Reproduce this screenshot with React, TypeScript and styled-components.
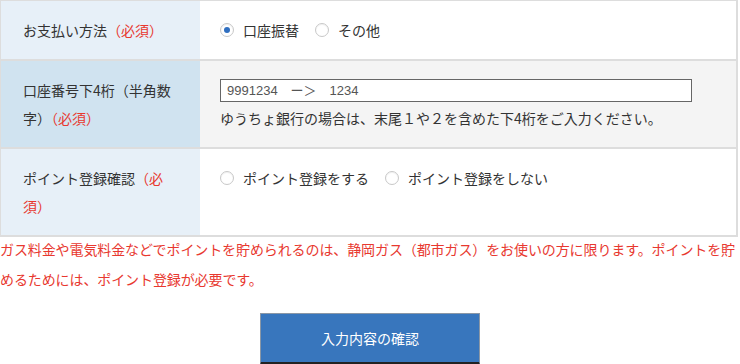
import React from "react";
import styled, { createGlobalStyle } from "styled-components";

const GlobalStyle = createGlobalStyle`
  html, body {
    margin: 0;
    padding: 0;
    background: #ffffff;
  }
  body {
    font-family: "Noto Sans CJK JP", "Noto Sans", sans-serif;
    font-size: 14px;
    color: #333333;
  }
`;

const Page = styled.div`
  width: 740px;
`;

const FormTable = styled.div`
  width: 738px;
  border-left: 1px solid #dddddd;
  border-right: 2px solid #dddddd;
  border-top: 1px solid #dddddd;
  box-sizing: border-box;
`;

const Row = styled.div`
  display: grid;
  grid-template-columns: 199px 1fr;
  border-bottom: 2px solid #dddddd;
`;

const Label = styled.div<{ $tone: "light" | "dark" }>`
  background: ${(p) => (p.$tone === "dark" ? "#d0e3f0" : "#e7f0f8")};
  padding: 15px 22px;
  line-height: 28px;
  display: flex;
  align-items: center;
`;

const Required = styled.span`
  color: #e8382f;
`;

const Value = styled.div<{ $grey?: boolean }>`
  background: ${(p) => (p.$grey ? "#f4f4f4" : "#ffffff")};
  padding: 15px 20px;
  line-height: 28px;
`;

const RadioGroup = styled.div`
  display: flex;
  align-items: center;
  gap: 16px;
`;

const RadioItem = styled.label`
  display: flex;
  align-items: center;
  gap: 9px;
  cursor: pointer;
`;

const RadioMark = styled.span<{ $checked?: boolean }>`
  width: 14px;
  height: 14px;
  border-radius: 50%;
  border: 1px solid #c8c8c8;
  background: #ffffff;
  box-sizing: border-box;
  box-shadow: inset 0 1px 1px rgba(0, 0, 0, 0.06);
  display: flex;
  align-items: center;
  justify-content: center;
  &::after {
    content: "";
    width: 6px;
    height: 6px;
    border-radius: 50%;
    background: ${(p) => (p.$checked ? "#2f6fc0" : "transparent")};
  }
`;

const InputLine = styled.div`
  height: 28px;
  display: flex;
  align-items: center;
`;

const TextInput = styled.input`
  width: 472px;
  height: 23px;
  box-sizing: border-box;
  border: 1px solid #666666;
  border-radius: 0;
  padding: 0 6px;
  font-family: "Liberation Sans", "Noto Sans CJK JP", sans-serif;
  font-size: 13px;
  color: #555555;
  background: #ffffff;
  outline: none;
  &::placeholder {
    color: #555555;
    opacity: 1;
  }
`;

const Note = styled.p`
  margin: -3px 0 0;
  color: #e8382f;
  line-height: 30px;
  letter-spacing: -0.1px;
`;

const ButtonArea = styled.div`
  display: flex;
  justify-content: center;
  padding-top: 19px;
`;

const SubmitButton = styled.button`
  width: 220px;
  height: 52px;
  background: #3876bd;
  color: #ffffff;
  font-family: "Noto Sans CJK JP", sans-serif;
  font-size: 14px;
  border: 1px solid #8a97a6;
  border-bottom: 3px solid #222222;
  padding: 0;
  cursor: pointer;
`;

type Option = { label: string; checked?: boolean };

const RadioSet = ({ options }: { options: Option[] }) => (
  <RadioGroup>
    {options.map((o) => (
      <RadioItem key={o.label}>
        <RadioMark $checked={o.checked} />
        {o.label}
      </RadioItem>
    ))}
  </RadioGroup>
);

export default function App() {
  return (
    <Page>
      <GlobalStyle />
      <FormTable>
        <Row>
          <Label $tone="light">
            <span>
              お支払い方法<Required>（必須）</Required>
            </span>
          </Label>
          <Value>
            <RadioSet options={[{ label: "口座振替", checked: true }, { label: "その他" }]} />
          </Value>
        </Row>
        <Row>
          <Label $tone="dark">
            <span>
              口座番号下4桁（半角数字）<Required>（必須）</Required>
            </span>
          </Label>
          <Value $grey>
            <InputLine>
              <TextInput placeholder="9991234　ー＞　1234" />
            </InputLine>
            <div>ゆうちょ銀行の場合は、末尾１や２を含めた下4桁をご入力ください。</div>
          </Value>
        </Row>
        <Row>
          <Label $tone="light">
            <span>
              ポイント登録確認<Required>（必須）</Required>
            </span>
          </Label>
          <Value>
            <RadioSet options={[{ label: "ポイント登録をする" }, { label: "ポイント登録をしない" }]} />
          </Value>
        </Row>
      </FormTable>
      <Note>
        ガス料金や電気料金などでポイントを貯められるのは、静岡ガス（都市ガス）をお使いの方に限ります。ポイントを貯めるためには、ポイント登録が必要です。
      </Note>
      <ButtonArea>
        <SubmitButton>入力内容の確認</SubmitButton>
      </ButtonArea>
    </Page>
  );
}
